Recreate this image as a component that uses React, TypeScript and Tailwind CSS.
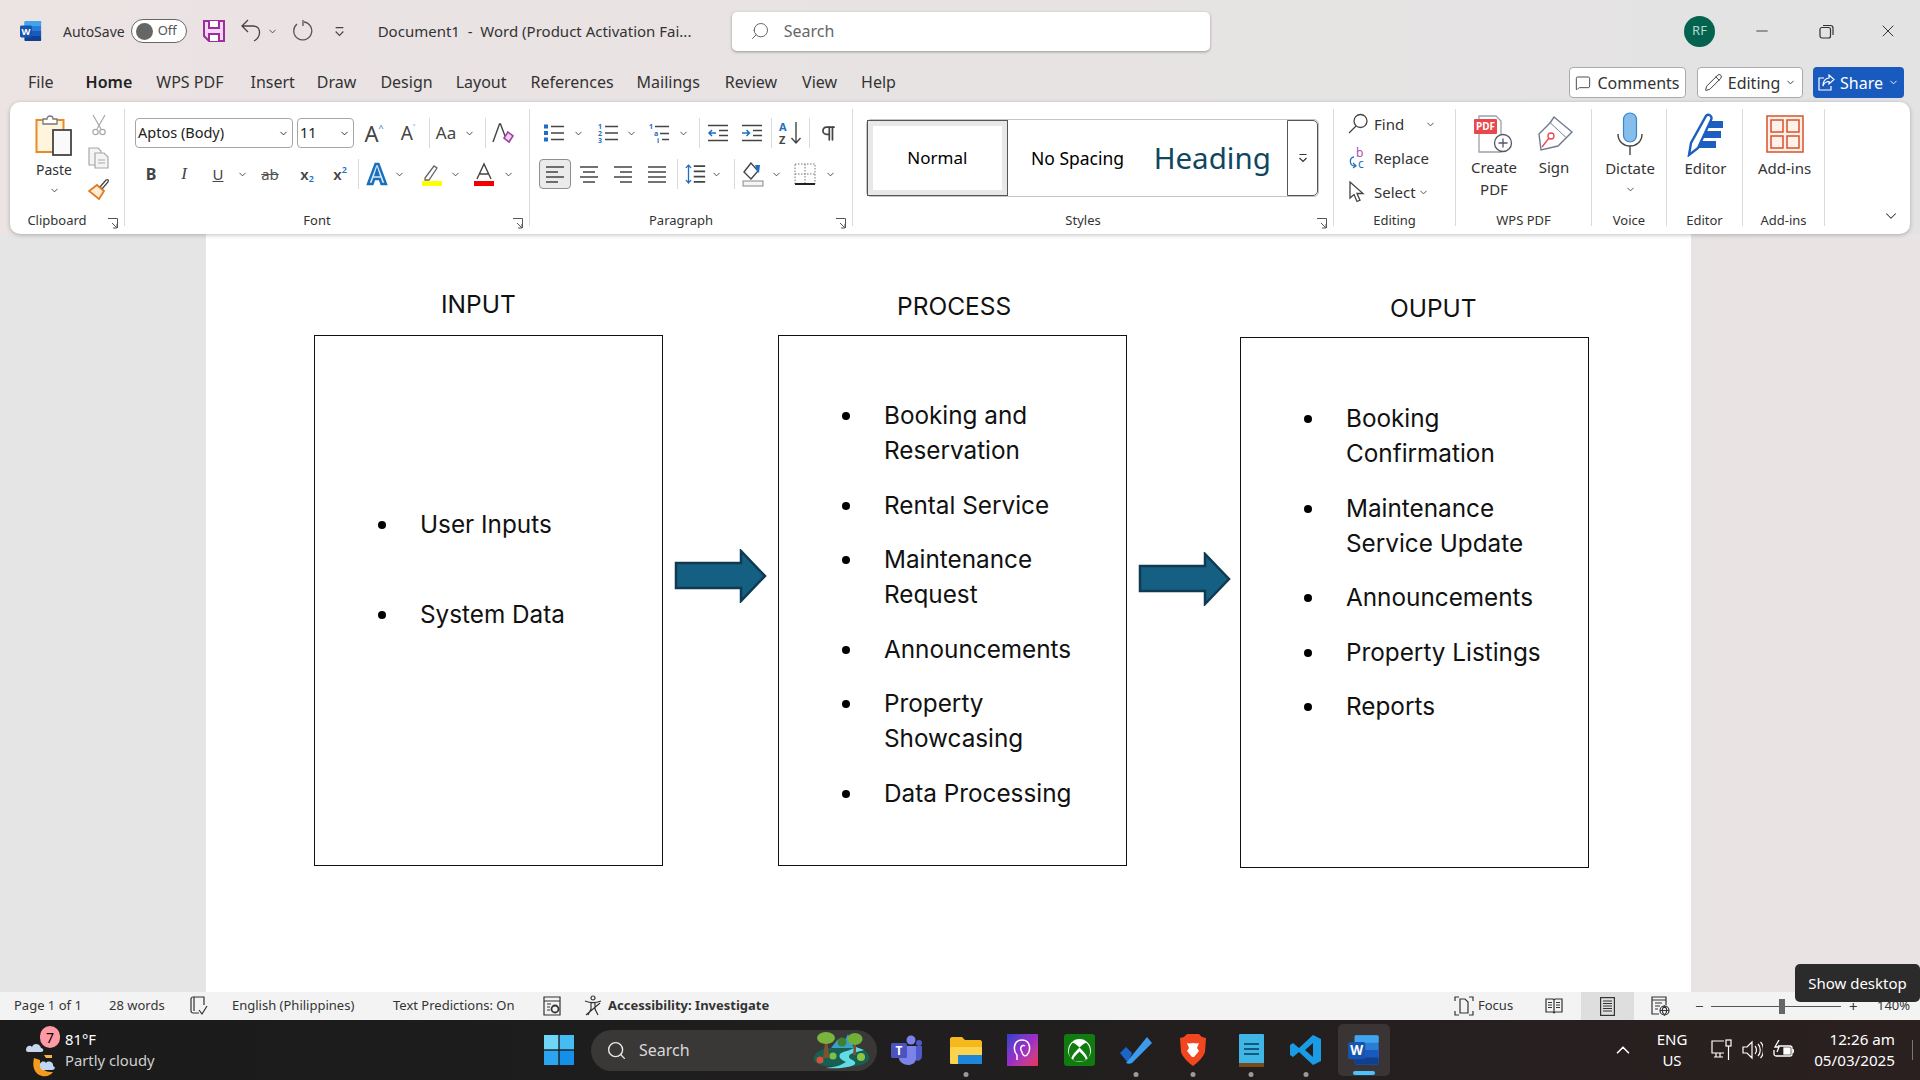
import { ReactNode } from "react";
import { ChevronDown, ChevronUp, Minus, X, Search, Pencil, MessageSquare, Pilcrow } from "lucide-react";

const Chev = ({ className = "w-[14px]", size = 11 }: { className?: string; size?: number }) => (
  <div className={`flex h-full shrink-0 items-center justify-center text-[#444] ${className}`}>
    <ChevronDown size={size} strokeWidth={2} />
  </div>
);

const Slot = ({ className = "", children }: { className?: string; children: ReactNode }) => (
  <div className={`flex h-full w-[32px] shrink-0 items-center justify-center ${className}`}>{children}</div>
);

const VSep = ({ className = "" }: { className?: string }) => (
  <div className={`h-full w-px shrink-0 bg-[#d9d9d9] ${className}`} />
);

const Launcher = () => (
  <svg width="11" height="11" viewBox="0 0 11 11" className="absolute right-[6px] bottom-[-3px]" fill="none" stroke="#555" strokeWidth="1">
    <path d="M1 .5h9.5V10M5 5l4.5 4.5M6 10h4V6" />
  </svg>
);

function Group({ className, label, launcher, children }: { className: string; label: string; launcher?: boolean; children: ReactNode }) {
  return (
    <div className={`flex h-[117px] shrink-0 flex-col border-r border-[#d9d9d9] ${className}`}>
      <div className="min-h-0 flex-1 pt-[4px]">{children}</div>
      <div className={`relative h-[17px] pt-[3px] text-center text-[13px] leading-[17px] text-[#333] ${launcher ? "pr-[20px]" : ""}`}>
        {label}
        {launcher && <Launcher />}
      </div>
    </div>
  );
}

const WordLogo = ({ size = 22 }: { size?: number }) => (
  <svg width={size} height={size} viewBox="0 0 24 24">
    <rect x="5" y="1" width="18" height="22" rx="1.5" fill="#2b7cd3" />
    <rect x="5" y="1" width="18" height="5.5" rx="1" fill="#41a5ee" />
    <rect x="5" y="12" width="18" height="5.5" fill="#185abd" />
    <rect x="5" y="17.5" width="18" height="5.5" rx="1" fill="#103f91" />
    <rect x="0" y="6" width="13" height="13" rx="1.5" fill="#1754b0" />
    <text x="6.5" y="16" textAnchor="middle" fontSize="10" fontWeight="700" fill="#fff" fontFamily="Noto Sans, sans-serif">W</text>
  </svg>
);

const ListLines = ({ mark }: { mark: "bullet" | "num" | "multi" }) => (
  <svg width="22" height="20" viewBox="0 0 22 20" fill="none">
    {mark === "bullet" && (
      <g fill="#1d6fc4">
        <rect x="1" y="1.5" width="4" height="4" />
        <rect x="1" y="8" width="4" height="4" />
        <rect x="1" y="14.5" width="4" height="4" />
      </g>
    )}
    {mark === "num" && (
      <g fill="#1d6fc4" fontSize="7" fontWeight="700" fontFamily="Noto Sans, sans-serif">
        <text x="1" y="6">1</text><text x="1" y="13">2</text><text x="1" y="20">3</text>
      </g>
    )}
    {mark === "multi" && (
      <g fill="#1d6fc4" fontSize="7" fontWeight="700" fontFamily="Noto Sans, sans-serif">
        <text x="0" y="6">1</text><text x="5" y="13">a</text><text x="8" y="20">i</text>
      </g>
    )}
    <path
      d={mark === "multi" ? "M6 3.5h14M11 10.5h9M13 16.5h7" : "M8 3.5h13M8 10h13M8 16.5h13"}
      stroke="#444"
      strokeWidth="1.6"
    />
  </svg>
);

const Indent = ({ flip }: { flip?: boolean }) => (
  <svg width="22" height="20" viewBox="0 0 22 20" fill="none" stroke="#444" strokeWidth="1.5">
    <path d="M1 2.5h20M12 7.5h9M12 12.5h9M1 17.5h20" />
    <path d={flip ? "M1 10h7M5.5 7l3 3-3 3" : "M9 10H2M5 7l-3 3 3 3"} stroke="#1d6fc4" />
  </svg>
);

const Align = ({ kind }: { kind: "l" | "c" | "r" | "j" }) => {
  const d = {
    l: "M1 3h18M1 8h12M1 13h18M1 18h12",
    c: "M1 3h18M4 8h12M1 13h18M4 18h12",
    r: "M1 3h18M7 8h12M1 13h18M7 18h12",
    j: "M1 3h18M1 8h18M1 13h18M1 18h18",
  }[kind];
  return (
    <svg width="20" height="21" viewBox="0 0 20 21" fill="none" stroke="#444" strokeWidth="1.6">
      <path d={d} />
    </svg>
  );
};

function ClipboardGroup() {
  return (
    <div className="flex h-full pl-[14px]">
      <div className="flex w-[60px] flex-col items-center">
        <svg width="38" height="42" viewBox="0 0 38 42" fill="none" className="mt-[2px]">
          <rect x="1.500" y="5" width="27" height="32" fill="#fff4dc" stroke="#e8892b" strokeWidth="2" />
          <path d="M8 9V4h4c0-4 6-4 6 0h4v5z" fill="#fff" stroke="#777" strokeWidth="1.300" />
          <rect x="18" y="15" width="18" height="25" fill="#fafafa" stroke="#444" strokeWidth="1.800" />
        </svg>
        <span className="mt-[3px] text-[14px] leading-[20px] text-[#333]">Paste</span>
        <ChevronDown size={11} className="mt-[5px] text-[#444]" />
      </div>
      <div className="flex flex-col items-center gap-[11px] pl-[4px]">
        <svg width="16" height="22" viewBox="0 0 16 22" fill="none" stroke="#a8a8a8" strokeWidth="1.200" className="mt-[1px]">
          <path d="M2 1l8 14M14 1 6 15" />
          <circle cx="4.500" cy="18" r="2.700" />
          <circle cx="11.500" cy="18" r="2.700" />
        </svg>
        <svg width="22" height="22" viewBox="0 0 22 22" fill="#f4f4f4" stroke="#a8a8a8" strokeWidth="1.200">
          <path d="M1 1h9l3 3v14H1z" />
          <path d="M7 6h9l4 4v11H7z" />
          <path d="M10 13h7M10 16h7" fill="none" />
        </svg>
        <svg width="22" height="22" viewBox="0 0 22 22" fill="none" className="-mt-[2px]">
          <path d="M12 9 18 2c2-1 3 0 2 2l-6 7z" stroke="#444" strokeWidth="1.300" />
          <path d="M9 7l7 6-5 8-10-8z" fill="#fdebd3" stroke="#e07a1f" strokeWidth="1.800" />
        </svg>
      </div>
    </div>
  );
}

function FontGroup() {
  return (
    <div className="flex h-full flex-col gap-[11px] pt-[5px] pl-[10px]">
      <div className="flex h-[30px]">
        <div className="flex h-full w-[158px] items-center justify-between rounded-[4px] border border-[#a6a6a6] pr-[3px] pl-[2px] text-[14.5px] text-[#222]">
          Aptos (Body) <ChevronDown size={11} />
        </div>
        <div className="ml-[4px] flex h-full w-[57px] items-center justify-between rounded-[4px] border border-[#a6a6a6] pr-[3px] pl-[2px] text-[14.5px] text-[#222]">
          11 <ChevronDown size={11} />
        </div>
        <Slot className="ml-[2px] w-[36px] text-[22px] text-[#444]">A<span className="-mt-[10px] text-[9px] text-[#1d6fc4]">^</span></Slot>
        <Slot className="w-[30px] text-[19px] text-[#444]">A<span className="-mt-[10px] text-[8px] text-[#1d6fc4]">˅</span></Slot>
        <VSep className="ml-[5px]" />
        <Slot className="text-[17px] text-[#444]">Aa</Slot>
        <Chev />
        <VSep className="ml-[9px]" />
        <Slot className="w-[34px]">
          <svg width="24" height="24" viewBox="0 0 24 24" fill="none">
            <path d="M2 21 8.5 3h1L14 15" stroke="#444" strokeWidth="1.4" />
            <path d="m17 11 5 4-4 6-5-4z" fill="#e9d4ee" stroke="#a33ea1" strokeWidth="1.6" />
          </svg>
        </Slot>
      </div>
      <div className="flex h-[30px] items-center">
        <Slot className="text-[16px] font-bold text-[#444]">B</Slot>
        <Slot className="ml-px font-['Liberation_Serif',serif] text-[17px] italic text-[#444]">I</Slot>
        <Slot className="ml-[2px] text-[15px] text-[#444] underline">U</Slot>
        <Chev className="ml-px w-[14px]" />
        <Slot className="ml-[5px] text-[15px] text-[#555] line-through">ab</Slot>
        <Slot className="ml-[5px] text-[15px] font-semibold text-[#444]">x<span className="mt-[10px] text-[9px] text-[#1d6fc4]">2</span></Slot>
        <Slot className="ml-px text-[15px] font-semibold text-[#444]">x<span className="-mt-[9px] text-[9px] text-[#1d6fc4]">2</span></Slot>
        <VSep className="ml-[2px]" />
        <Slot className="ml-[2px]">
          <svg width="22" height="24" viewBox="0 0 22 24" fill="#d7e9f8" stroke="#1a6fbd" strokeWidth="2.4">
            <path d="M2 22 9.500 2h3L20 22h-4.500l-1.700-5H8.200l-1.700 5zM9.600 13h2.800L11 8.500z" />
          </svg>
        </Slot>
        <Chev className="w-[12px]" />
        <Slot className="ml-[11px]">
          <svg width="22" height="24" viewBox="0 0 22 24" fill="none">
            <path d="M4 16 13 4l3 2-8 12H4z" stroke="#666" strokeWidth="1.3" />
            <rect x="1" y="19" width="20" height="5" fill="#ffff00" />
          </svg>
        </Slot>
        <Chev className="ml-px w-[12px]" />
        <Slot className="ml-[7px]">
          <svg width="22" height="24" viewBox="0 0 22 24" fill="none">
            <path d="M4 17 11 2l7 15M6.500 12h9" stroke="#444" strokeWidth="1.4" />
            <rect x="1" y="19" width="20" height="5" fill="#f00000" />
          </svg>
        </Slot>
        <Chev className="ml-[2px] w-[12px]" />
      </div>
    </div>
  );
}

function ParagraphGroup() {
  return (
    <div className="flex h-full flex-col gap-[11px] pt-[5px] pl-[8px]">
      <div className="flex h-[30px]">
        <Slot><ListLines mark="bullet" /></Slot>
        <Chev className="ml-px w-[14px]" />
        <Slot className="ml-[7px]"><ListLines mark="num" /></Slot>
        <Chev className="w-[14px]" />
        <Slot className="ml-[6px]"><ListLines mark="multi" /></Slot>
        <Chev className="w-[14px]" />
        <VSep className="ml-[9px]" />
        <Slot className="ml-[2px]"><Indent /></Slot>
        <Slot className="ml-[2px]"><Indent flip /></Slot>
        <VSep className="ml-[3px]" />
        <Slot className="ml-[3px]">
          <svg width="26" height="26" viewBox="0 0 26 26" fill="none">
            <text x="1" y="11" fontSize="11" fontWeight="700" fill="#1d6fc4" fontFamily="Noto Sans, sans-serif">A</text>
            <text x="1" y="24" fontSize="11" fontWeight="700" fill="#444" fontFamily="Noto Sans, sans-serif">Z</text>
            <path d="M18 2v21M13.500 18l4.500 5 4.500-5" stroke="#444" strokeWidth="1.4" />
          </svg>
        </Slot>
        <VSep className="ml-[2px]" />
        <Slot className="ml-[2px]"><Pilcrow size={19} strokeWidth={2.2} className="text-[#444]" /></Slot>
      </div>
      <div className="-ml-px flex h-[30px]">
        <Slot className="ml-[2px] w-[30px] rounded-[4px] border border-[#8f8f8f] bg-[#ebebeb]"><Align kind="l" /></Slot>
        <Slot className="ml-[2px]"><Align kind="c" /></Slot>
        <Slot className="ml-[2px]"><Align kind="r" /></Slot>
        <Slot className="ml-[2px]"><Align kind="j" /></Slot>
        <VSep className="ml-[4px]" />
        <Slot className="ml-[1px]">
          <svg width="21" height="22" viewBox="0 0 24 24" fill="none">
            <path d="M10 3h13M10 9h13M10 15h13M10 21h13" stroke="#444" strokeWidth="1.8" />
            <path d="M4 1v22M1 5l3-3 3 3M1 19l3 3 3-3" stroke="#1d6fc4" strokeWidth="1.500" />
          </svg>
        </Slot>
        <Chev className="-ml-[2px] w-[14px]" />
        <VSep className="ml-[11px]" />
        <Slot className="ml-[2px]">
          <svg width="24" height="26" viewBox="0 0 24 26" fill="none">
            <path d="m10 2-7 9 7 7 7-8z" stroke="#444" strokeWidth="1.4" />
            <path d="M14 4h5l-1 8-2-2z" fill="#1d6fc4" />
            <rect x="2" y="20" width="20" height="5" fill="#f4f4f4" stroke="#888" />
          </svg>
        </Slot>
        <Chev className="w-[14px]" />
        <Slot className="ml-[6px]">
          <svg width="22" height="22" viewBox="0 0 22 22" fill="none" stroke="#777" strokeWidth="1" strokeDasharray="1.500 1.500">
            <rect x="1" y="1" width="20" height="20" />
            <path d="M11 1v20M1 11h20" />
            <path d="M1 21h20" stroke="#222" strokeWidth="2" strokeDasharray="none" />
          </svg>
        </Slot>
        <Chev className="ml-[2px] w-[14px]" />
      </div>
    </div>
  );
}

function StylesGroup() {
  return (
    <div className="pt-[6px] pl-[13px]">
      <div className="flex h-[78px] w-[453px] items-stretch rounded-[5px] border border-[#c4c4c4]">
        <div className="flex w-[141px] items-center justify-center border-[1.5px] border-[#555] text-[17px] text-black outline-[5px] -outline-offset-[6px] outline-[#e8e8e8]">
          Normal
        </div>
        <div className="flex w-[140px] items-center justify-center whitespace-nowrap text-[17.5px] text-black">No Spacing</div>
        <div className="flex w-[140px] items-center justify-center pr-[10px] text-[29.5px] text-[#0f4761]">Heading</div>
        <div className="flex w-[31px] items-center justify-center rounded-r-[5px] border border-[#555]">
          <svg width="10" height="10" viewBox="0 0 10 10" fill="none" stroke="#333" strokeWidth="1.2">
            <path d="M1.500 1.500h7M1.500 5l3.500 3.500L8.500 5" />
          </svg>
        </div>
      </div>
    </div>
  );
}

function EditingGroup() {
  return (
    <div className="-mt-px flex flex-col gap-[10px] pl-[13px] text-[15px] text-[#333]">
      <div className="flex h-[24px] items-center">
        <div className="flex w-[27px] justify-start">
          <svg width="22" height="22" viewBox="0 0 22 22" fill="none" stroke="#444" strokeWidth="1.3">
            <circle cx="13.500" cy="8" r="6.500" />
            <path d="M9 13 2 20" />
          </svg>
        </div>
        <span>Find</span>
        <ChevronDown size={11} className="ml-[21px] text-[#444]" />
      </div>
      <div className="flex h-[24px] items-center">
        <div className="flex w-[27px] justify-start">
          <svg width="22" height="24" viewBox="0 0 22 24" fill="none">
            <text x="9" y="11" fontSize="12" fill="#b04bb5" fontFamily="Noto Sans, sans-serif">b</text>
            <text x="11" y="22" fontSize="12" fill="#1d6fc4" fontFamily="Noto Sans, sans-serif">c</text>
            <path d="M7 11c-5 0-5 9 1 9M6 17l3 3-3 2" stroke="#1d6fc4" strokeWidth="1.3" />
          </svg>
        </div>
        <span>Replace</span>
      </div>
      <div className="flex h-[24px] items-center">
        <div className="flex w-[27px] justify-start">
          <svg width="20" height="22" viewBox="0 0 20 22" fill="none" stroke="#444" strokeWidth="1.300">
            <path d="M3 1v16l4-3.500 3 7 3-1.300-3-6.700h6z" />
          </svg>
        </div>
        <span>Select</span>
        <ChevronDown size={11} className="ml-[2px] text-[#444]" />
      </div>
    </div>
  );
}

function WpsGroup() {
  return (
    <div className="flex pl-[14px] text-center text-[15px] leading-[22px] text-[#333]">
      <div className="flex w-[48px] flex-col items-center">
        <svg width="42" height="38" viewBox="0 0 42 38" fill="none" className="mt-[2px] mb-[3px]">
          <path d="M6 1h17l5 5v31H6z" fill="#fff" stroke="#9aa0a8" strokeWidth="1.3" />
          <rect x="1" y="4" width="23" height="15" rx="1" fill="#e8474c" />
          <text x="12.500" y="15" textAnchor="middle" fontSize="10" fontWeight="700" fill="#fff" fontFamily="Noto Sans, sans-serif">PDF</text>
          <circle cx="30" cy="28" r="8.500" fill="#fff" stroke="#556" strokeWidth="1.3" />
          <path d="M30 23.500v9M25.500 28h9" stroke="#556" strokeWidth="1.3" />
        </svg>
        <span>Create</span>
        <span>PDF</span>
      </div>
      <div className="ml-[12px] flex w-[48px] flex-col items-center">
        <svg width="40" height="38" viewBox="0 0 40 38" fill="none" className="mt-[2px] mb-[3px]">
          <path d="M20 2 38 17l-6 6L16 8z" fill="#fff" stroke="#6d7a8c" strokeWidth="1.4" />
          <path d="M16 8 5 19l2 16 17-4 8-8" fill="#fff" stroke="#6d7a8c" strokeWidth="1.4" />
          <circle cx="17" cy="21" r="3" stroke="#e8474c" strokeWidth="1.3" />
          <path d="m15 23-7 9" stroke="#e8474c" strokeWidth="1.3" />
        </svg>
        <span>Sign</span>
      </div>
    </div>
  );
}

function VoiceGroup() {
  return (
    <div className="flex flex-col items-center pl-[2px] text-[15px] leading-[22px] text-[#333]">
      <svg width="30" height="44" viewBox="0 0 30 44" fill="none" className="-mt-[1px]">
        <rect x="8.500" y="1" width="13" height="29" rx="6.500" fill="#85bdec" stroke="#3a85cc" strokeWidth="1.2" />
        <path d="M3 22c0 16 24 16 24 0M15 34v9" stroke="#444" strokeWidth="1.4" />
      </svg>
      <span className="mt-[1px]">Dictate</span>
      <ChevronDown size={11} className="mt-[5px] text-[#444]" />
    </div>
  );
}

function EditorGroup() {
  return (
    <div className="flex flex-col items-center pl-[2px] text-[15px] leading-[22px] text-[#333]">
      <svg width="42" height="44" viewBox="0 0 42 44" fill="none">
        <path d="M22 8h16v7H20zM18 18h18v7H16zM15 28h16v7H13z" fill="#1d5fc0" />
        <path d="M4 42 6 30 21 3c2-3 7 0 5 4L13 35z" fill="#fff" stroke="#1d5fc0" strokeWidth="2.4" />
      </svg>
      <span>Editor</span>
    </div>
  );
}

function AddinsGroup() {
  return (
    <div className="flex flex-col items-center pl-[2px] text-[15px] leading-[22px] text-[#333]">
      <svg width="38" height="38" viewBox="0 0 38 38" fill="none" stroke="#d8512b" strokeWidth="1.500" className="mt-[2px] mb-[4px]">
        <rect x="1" y="1" width="36" height="36" fill="#fdf1ec" />
        <rect x="5" y="5" width="12" height="12" />
        <rect x="21" y="5" width="12" height="12" />
        <rect x="5" y="21" width="12" height="12" />
        <rect x="21" y="21" width="12" height="12" />
      </svg>
      <span>Add-ins</span>
    </div>
  );
}

function Bullets({ items, className }: { items: string[][]; className: string }) {
  return (
    <ul className={`flex flex-col text-[24.3px] leading-[35px] text-[#111] ${className}`}>
      {items.map((lines) => (
        <li key={lines[0]} className="flex">
          <span className="mt-[14px] ml-[63px] h-[8px] w-[8px] shrink-0 rounded-full bg-black" />
          <span className="ml-[34px]">
            {lines.map((l) => <span key={l} className="block whitespace-nowrap">{l}</span>)}
          </span>
        </li>
      ))}
    </ul>
  );
}

const Arrow = ({ className }: { className: string }) => (
  <svg width="93" height="54" viewBox="0 0 93 54" className={`absolute ${className}`}>
    <path d="M2 14h65V2l24 25-24 25V39H2z" fill="#156082" stroke="#0e3b52" strokeWidth="2.500" />
  </svg>
);

const DiagramBox = ({ className, children }: { className: string; children: ReactNode }) => (
  <div className={`absolute h-[531px] w-[349px] border-[1.5px] border-[#111] ${className}`}>{children}</div>
);

function Page() {
  return (
    <div className="relative ml-[206px] h-full w-[1485px] bg-white font-['Inter',sans-serif] text-[24.5px] text-[#111]">
      <span className="absolute top-[52px] left-[235px]">INPUT</span>
      <span className="absolute top-[54px] left-[691px]">PROCESS</span>
      <span className="absolute top-[56px] left-[1184px]">OUPUT</span>
      <DiagramBox className="top-[101px] left-[108px]">
        <Bullets className="gap-[55px] pt-[171px]" items={[["User Inputs"], ["System Data"]]} />
      </DiagramBox>
      <DiagramBox className="top-[101px] left-[572px]">
        <Bullets
          className="gap-[19.6px] pt-[62px]"
          items={[["Booking and", "Reservation"], ["Rental Service"], ["Maintenance", "Request"], ["Announcements"], ["Property", "Showcasing"], ["Data Processing"]]}
        />
      </DiagramBox>
      <DiagramBox className="top-[103px] left-[1034px]">
        <Bullets
          className="gap-[19.6px] pt-[63px]"
          items={[["Booking", "Confirmation"], ["Maintenance", "Service Update"], ["Announcements"], ["Property Listings"], ["Reports"]]}
        />
      </DiagramBox>
      <Arrow className="top-[315px] left-[468px]" />
      <Arrow className="top-[318px] left-[932px]" />
    </div>
  );
}

const ReadIcon = () => (
  <svg width="18" height="18" viewBox="0 0 18 18" fill="none" stroke="#333" strokeWidth="1.200">
    <path d="M1 2h7l1 1 1-1h7v13h-7l-1 1-1-1H1zM9 3v12M3 5.500h4M3 8h4M3 10.500h4M11 5.500h4M11 8h4M11 10.500h4" />
  </svg>
);

function StatusBar() {
  return (
    <div className="flex h-[28px] shrink-0 items-center bg-[#f3f3f3] pl-[14px] text-[13px] text-[#333]">
      <span className="w-[75px]">Page 1 of 1</span>
      <span className="ml-[20px] w-[60px]">28 words</span>
      <svg width="18" height="20" viewBox="0 0 18 20" fill="none" stroke="#333" strokeWidth="1.200" className="ml-[21px]">
        <path d="M9 17H3c-1 0-2-1-2-2V3c0-1 1-2 2-2h11v8M4 1v14" />
        <path d="m9 14 3 4 5-8" />
      </svg>
      <span className="ml-[24px] w-[123px] whitespace-nowrap">English (Philippines)</span>
      <span className="ml-[38px] w-[124px] whitespace-nowrap">Text Predictions: On</span>
      <svg width="20" height="20" viewBox="0 0 20 20" fill="none" stroke="#333" strokeWidth="1.200" className="ml-[25px]">
        <path d="M2 1h16v18H2zM2 5h16M5 8h4M5 11h3M5 14h3" />
        <circle cx="13" cy="13" r="3.500" strokeWidth="1.800" />
      </svg>
      <svg width="20" height="22" viewBox="0 0 20 22" fill="none" stroke="#333" strokeWidth="1.200" className="ml-[21px]">
        <circle cx="10" cy="3" r="2" />
        <path d="M2 6c5 2 11 2 16 0M8 8v6l-3 6M12 8v6l3 6M3 20 17 8" />
      </svg>
      <span className="ml-[5px] font-bold">Accessibility: Investigate</span>
      <div className="ml-auto flex h-full items-center">
        <svg width="20" height="20" viewBox="0 0 20 20" fill="none" stroke="#333" strokeWidth="1.200">
          <path d="M1 5V1h4M15 1h4v4M19 15v4h-4M5 19H1v-4" />
          <path d="M6 3h5l3 3v11H6z" />
        </svg>
        <span className="ml-[4px] w-[35px]">Focus</span>
        <div className="ml-[32px]"><ReadIcon /></div>
        <div className="ml-[18px] flex h-full w-[53px] items-center justify-center bg-[#dedede]">
          <svg width="15" height="19" viewBox="0 0 15 19" fill="none" stroke="#333" strokeWidth="1.200">
            <rect x=".6" y=".6" width="13.800" height="17.800" />
            <path d="M3 4h9M3 6.500h9M3 9h9M3 11.500h9M3 14h9" />
          </svg>
        </div>
        <svg width="19" height="20" viewBox="0 0 19 20" fill="none" stroke="#333" strokeWidth="1.200" className="ml-[17px]">
          <path d="M8 18H1V1h14v8M1 4h14M4 7h7M4 10h5M4 13h3" />
          <circle cx="13.500" cy="14.500" r="4.500" fill="#f3f3f3" />
          <path d="M9 14.500h9M13.500 10c-3 3-3 6 0 9 3-3 3-6 0-9z" />
        </svg>
        <Minus size={11} className="ml-[24px]" />
        <div className="relative ml-[6px] h-px w-[130px] bg-[#555]">
          <div className="absolute top-[-7px] left-[68px] h-[15px] w-[6px] bg-[#666]" />
        </div>
        <span className="ml-[8px] w-[9px] text-[15px] leading-none">+</span>
        <span className="ml-[19px] w-[43px]">140%</span>
      </div>
    </div>
  );
}

const TaskDot = ({ className = "" }: { className?: string }) => (
  <span className={`absolute bottom-[3px] left-1/2 h-[5px] w-[5px] -translate-x-1/2 rounded-full bg-[#9a9a9a] ${className}`} />
);

const TaskIcon = ({ className, dot, children }: { className: string; dot?: boolean; children: ReactNode }) => (
  <div className={`relative flex h-[60px] shrink-0 items-center justify-center ${className}`}>
    {children}
    {dot && <TaskDot />}
  </div>
);

function Taskbar() {
  return (
    <div className="flex h-[60px] shrink-0 items-center bg-gradient-to-r from-[#1b1b1b] via-[#201e1e] to-[#2b2020] text-white">
      <div className="relative ml-[25px] h-[60px] w-[40px] shrink-0">
        <svg width="36" height="50" viewBox="0 0 36 50" className="absolute top-[8px] left-0">
          <path d="M1 22c0-5 5-5 6-3 2-5 8-3 9 1 3 0 3 4 0 4H3c-1 0-2-1-2-2z" fill="#c7d8ee" />
          <path d="M9 30c-2 8 0 16 8 18 5 1 9-1 11-4-8 1-14-5-13-12z" fill="#f39b1d" />
          <path d="M15 38c-1-4 4-6 6-3 2-3 8-1 7 3 3 1 2 4-1 4H18c-2 0-3-2-3-4z" fill="#bfd8f4" />
          <path d="M27 27h-8l2 3h6z" fill="#f3b545" />
        </svg>
        <span className="absolute top-[6px] left-[15px] flex h-[22px] w-[20px] items-center justify-center rounded-full bg-[#ff9aa5] text-[14px] text-black">7</span>
      </div>
      <div className="flex w-[100px] shrink-0 flex-col text-[14.8px] leading-[21px]">
        <span>81°F</span>
        <span className="text-[#cfcfcf]">Partly cloudy</span>
      </div>
      <svg width="30" height="30" viewBox="0 0 30 30" className="ml-[379px] shrink-0">
        <rect x="0" y="0" width="14.300" height="14.300" fill="#6fd6f8" />
        <rect x="15.700" y="0" width="14.300" height="14.300" fill="#46bdf2" />
        <rect x="0" y="15.700" width="14.300" height="14.300" fill="#2ba5ee" />
        <rect x="15.700" y="15.700" width="14.300" height="14.300" fill="#1490ea" />
      </svg>
      <div className="ml-[17px] flex h-[41px] w-[286px] shrink-0 items-center rounded-full bg-[#3a3837] pl-[15px]">
        <Search size={21} strokeWidth={1.6} className="text-[#e8e8e8]" />
        <span className="ml-[12px] text-[16px] text-[#d8d8d8]">Search</span>
        <svg width="60" height="38" viewBox="0 0 60 38" className="mr-[6px] ml-auto">
          <path d="M3 26c2-6 8-8 14-9h26c8 0 14 3 15 9 1 6-8 10-28 10S1 32 3 26z" fill="#175f52" />
          <path d="M30 17 37 3l6 14zM20 17l7-9 5 9z" fill="#3aa0c8" />
          <path d="M15 37c8-1 14-2 20-6-4-2-8-4-6-8 3-3 10-3 16-7l8 3c-6 2-14 3-15 6-1 4 8 4 6 8-3 3-14 5-29 4z" fill="#63dbe6" />
          <path d="M14 12h2.500l2 15H12zM43 12h2v12h-3z" fill="#7a5230" />
          <ellipse cx="15" cy="7" rx="9" ry="6" fill="#79b53c" />
          <ellipse cx="44" cy="8" rx="7.500" ry="6" fill="#6faf3a" />
          <ellipse cx="31" cy="11" rx="4.500" ry="4.500" fill="#3f7f30" />
          <circle cx="9" cy="29" r="3.500" fill="#d8503c" />
          <circle cx="22" cy="25" r="3.500" fill="#7fc04a" />
          <circle cx="50" cy="26" r="4" fill="#8cc63f" />
        </svg>
      </div>
      <TaskIcon className="ml-[12px] w-[36px]">
        <svg width="32" height="30" viewBox="0 0 32 30">
          <circle cx="20" cy="5" r="4.500" fill="#7b83eb" />
          <circle cx="28" cy="8" r="3" fill="#5059c9" />
          <path d="M22 11h9v10c0 4-4 6-7 4z" fill="#5059c9" />
          <path d="M8 11h17v12c0 5-4 7-8 7s-9-3-9-7z" fill="#7b83eb" />
          <rect x="0" y="8" width="16" height="15" rx="1.500" fill="#4b53bc" />
          <text x="8" y="20" textAnchor="middle" fontSize="12" fontWeight="700" fill="#fff" fontFamily="Noto Sans, sans-serif">T</text>
        </svg>
      </TaskIcon>
      <TaskIcon className="ml-[25px] w-[32px]" dot>
        <svg width="32" height="28" viewBox="0 0 32 28">
          <path d="M0 3c0-1 1-2 2-2h10l3 3h15c1 0 2 1 2 2v20c0 1-1 2-2 2H2c-1 0-2-1-2-2z" fill="#f6b91d" />
          <rect x="0" y="11" width="32" height="17" rx="1.500" fill="#fcd34d" />
          <rect x="8" y="19" width="24" height="9" fill="#1d86d8" />
        </svg>
      </TaskIcon>
      <TaskIcon className="ml-[24px] w-[32px]">
        <div className="flex h-[32px] w-[31px] items-center justify-center bg-gradient-to-br from-[#2440c8] via-[#9a2bc9] to-[#ee2a50]">
          <svg width="20" height="24" viewBox="0 0 20 24" fill="none" stroke="#fff" strokeWidth="1.500">
            <path d="M5 22v-5C1 13 1 2 10 2s9 11 5 15c-2 2-5 0-5-3-3-4 0-8 3-6" />
          </svg>
        </div>
      </TaskIcon>
      <TaskIcon className="ml-[26px] w-[31px]">
        <div className="flex h-[32px] w-[31px] items-center justify-center rounded-[3px] bg-[#107c10]">
          <svg width="25" height="25" viewBox="0 0 24 24" fill="#fff">
            <circle cx="12" cy="12" r="11" />
            <path d="M12 9C9 6 6 4 5 5c-4 4-4 11-1 15 1-4 5-8 8-11zm0 0c3-3 6-5 7-4 4 4 4 11 1 15-1-4-5-8-8-11zm0 4c-3 3-6 6-6 8 3 2 9 2 12 0 0-2-3-5-6-8z" fill="#107c10" />
          </svg>
        </div>
      </TaskIcon>
      <TaskIcon className="ml-[25px] w-[32px]" dot>
        <svg width="32" height="28" viewBox="0 0 32 28">
          <path d="M0 17 6 11l6 6L8 27z" fill="#1b64c8" />
          <path d="M6 27 27 1l5 6-20 20c-2 1-4 1-6 0z" fill="#3d9bec" />
        </svg>
      </TaskIcon>
      <TaskIcon className="ml-[28px] w-[26px]" dot>
        <svg width="26" height="32" viewBox="0 0 26 32">
          <path d="M7 0h12l3 3 4 1-1 14c-2 6-8 11-12 14C9 29 3 24 1 18L0 4l4-1z" fill="#f1461f" />
          <path d="M7 9c3 1 4 0 6 0s3 1 6 0l-2 5 2 3-5 6h-2l-5-6 2-3z" fill="#fff" />
        </svg>
      </TaskIcon>
      <TaskIcon className="ml-[32px] w-[26px]" dot>
        <svg width="25" height="34" viewBox="0 0 25 34">
          <rect x="0" y="1" width="25" height="33" rx="1" fill="#3fb6e6" />
          <rect x="0" y="30" width="25" height="4" fill="#7c4a16" />
          <path d="M5 11h15M5 16h15M5 21h15" stroke="#12597a" strokeWidth="2" />
        </svg>
      </TaskIcon>
      <TaskIcon className="ml-[26px] w-[32px]" dot>
        <svg width="32" height="32" viewBox="0 0 32 32" fill="none">
          <path d="M23 1 31 5v22l-8 4L9 18l-6 5-3-2v-10l3-2 6 5zM23 9l-8 7 8 7z" fill="#1a9be6" fillRule="evenodd" />
        </svg>
      </TaskIcon>
      <div className="relative ml-[16px] flex h-[52px] w-[52px] shrink-0 items-center justify-center rounded-[5px] bg-[#3a3434]">
        <WordLogo size={32} />
        <span className="absolute bottom-[1px] left-[15px] h-[4px] w-[22px] rounded-full bg-[#4cc2ff]" />
      </div>
      <ChevronUp size={22} strokeWidth={1.8} className="ml-[222px] shrink-0" />
      <div className="ml-[15px] flex w-[46px] shrink-0 flex-col items-center text-[15px] leading-[21px]">
        <span>ENG</span>
        <span>US</span>
      </div>
      <svg width="21" height="22" viewBox="0 0 21 22" fill="none" stroke="#fff" strokeWidth="1.200" className="ml-[16px] shrink-0">
        <path d="M13 14H1V2h12M5 14v4M9 14v4M3 18h9" />
        <rect x="15" y="1" width="5" height="6" />
        <path d="M17.500 7v14" />
      </svg>
      <svg width="21" height="20" viewBox="0 0 21 20" fill="none" stroke="#fff" strokeWidth="1.200" className="ml-[10px] shrink-0">
        <path d="M1 7h4l5-5v16l-5-5H1zM13 6c2 2 2 6 0 8M16 4c3 3 3 9 0 12M18.500 2c4 4 4 12 0 16" />
      </svg>
      <svg width="21" height="20" viewBox="0 0 21 20" fill="none" stroke="#fff" strokeWidth="1.300" className="ml-[10px] shrink-0">
        <path d="M5 6H17c1 0 2 1 2 2v6c0 1-1 2-2 2H3c-1 0-2-1-2-2V10M19 10h2v2h-2" />
        <path d="M6 0 2 7h4l-2 5" />
        <rect x="11" y="8" width="6" height="6" fill="#fff" />
      </svg>
      <div className="mr-[17px] ml-auto flex flex-col items-end text-[15.2px] leading-[21px]">
        <span>12:26 am</span>
        <span>05/03/2025</span>
      </div>
      <div className="mr-[7px] h-[20px] w-px bg-[#777]" />
    </div>
  );
}

export default function App() {
  return (
    <div className="relative flex h-[1080px] w-[1920px] flex-col overflow-hidden bg-gradient-to-r from-[#ece3e3] to-[#e3e3e3] font-['Noto_Sans',sans-serif]">
      {/* Title bar */}
      <div className="flex h-[62px] shrink-0 items-center text-[#333]">
        <div className="ml-[20px]"><WordLogo /></div>
        <span className="ml-[21px] text-[14px]">AutoSave</span>
        <div className="ml-[6px] flex h-[24px] w-[56px] items-center rounded-full border border-[#666] bg-white pl-[4px] text-[13px]">
          <span className="h-[17px] w-[17px] rounded-full bg-[#666]" />
          <span className="ml-[5px] text-[#555]">Off</span>
        </div>
        <svg width="22" height="22" viewBox="0 0 22 22" className="ml-[16px]" fill="#f3d7f3" stroke="#9c2f9c" strokeWidth="2">
          <path d="M1 1h20v20H6l-5-5z" />
          <path d="M6 1v7h10V1M6 21v-7h10v7" fill="#fff" />
        </svg>
        <svg width="22" height="24" viewBox="0 0 22 24" fill="none" stroke="#444" strokeWidth="1.300" className="ml-[15px]">
          <path d="M8 1 2 7l6 6M2 7h11c8 0 9 10 1 15" />
        </svg>
        <ChevronDown size={11} className="ml-[5px] text-[#444]" />
        <svg width="22" height="24" viewBox="0 0 22 24" fill="none" stroke="#555" strokeWidth="1.300" className="ml-[13px]">
          <path d="M13 3a9 9 0 1 1-7 2" />
          <path d="M12 1v6" />
        </svg>
        <svg width="11" height="11" viewBox="0 0 10 10" fill="none" stroke="#444" strokeWidth="1" className="ml-[21px]">
          <path d="M1.500 1.500h7M1.500 5l3.500 3.500L8.500 5" />
        </svg>
        <span className="ml-[33px] w-[330px] shrink-0 whitespace-pre text-[15px]">Document1  -  Word (Product Activation Fai...</span>
        <div className="ml-[24px] flex h-[39px] w-[478px] shrink-0 items-center rounded-[5px] bg-white pl-[18px] text-[16px] text-[#666] shadow-[0_1px_3px_rgba(0,0,0,0.35)]">
          <Search size={20} strokeWidth={1.2} className="-scale-x-100" />
          <span className="ml-[14px]">Search</span>
        </div>
        <div className="ml-auto flex h-[31px] w-[31px] items-center justify-center rounded-full bg-[#03634f] text-[13px] text-[#b5d8cf]">RF</div>
        <Minus size={18} strokeWidth={1.2} className="ml-[38px]" />
        <svg width="15" height="15" viewBox="0 0 15 15" fill="none" stroke="#333" strokeWidth="1.200" className="ml-[48px]">
          <rect x="1" y="3.500" width="10.500" height="10.500" rx="2" />
          <path d="M4 1.500h7.500c1.500 0 2.500 1 2.500 2.500v7" />
        </svg>
        <X size={20} strokeWidth={1.2} className="mr-[22px] ml-[44px]" />
      </div>
      {/* Tabs */}
      <div className="flex h-[40px] shrink-0 items-start pl-[28px] text-[16px] leading-[40px] text-[#333]">
        <span>File</span>
        <span className="relative ml-[32px] font-semibold text-[#222]">
          Home
          <span className="absolute right-0 bottom-[-3px] left-0 h-[3px] bg-[#185abd]" />
        </span>
        <span className="ml-[24px]">WPS PDF</span>
        <span className="ml-[27px]">Insert</span>
        <span className="ml-[22px]">Draw</span>
        <span className="ml-[24px]">Design</span>
        <span className="ml-[23px]">Layout</span>
        <span className="ml-[24px]">References</span>
        <span className="ml-[23px]">Mailings</span>
        <span className="ml-[25px]">Review</span>
        <span className="ml-[25px]">View</span>
        <span className="ml-[24px]">Help</span>
        <div className="mt-[5px] ml-auto flex h-[31px] items-center leading-none">
          <div className="flex h-full w-[117px] items-center justify-center gap-[6px] rounded-[4px] border border-[#aaa] bg-white text-[16px]">
            <MessageSquare size={16} strokeWidth={1.3} /> Comments
          </div>
          <div className="ml-[11px] flex h-full w-[106px] items-center justify-center gap-[5px] rounded-[4px] border border-[#aaa] bg-white text-[16px]">
            <Pencil size={19} strokeWidth={1.2} /> Editing <ChevronDown size={11} />
          </div>
          <div className="mr-[16px] ml-[10px] flex h-full w-[91px] items-center justify-center gap-[5px] rounded-[4px] bg-[#185abd] text-[16px] text-white">
            <svg width="17" height="17" viewBox="0 0 17 17" fill="none" stroke="#fff" strokeWidth="1.200">
              <path d="M6 4H1v12h12v-4" />
              <path d="M11 1l5 4.500L11 10V7.500C8 7.500 6 9 5 12c0-5 2-7.500 6-8z" />
            </svg>
            Share <ChevronDown size={11} />
          </div>
        </div>
      </div>
      {/* Ribbon */}
      <div className="relative z-10 mx-[10px] h-[132px] shrink-0 rounded-[10px] bg-white pt-[7px] shadow-[0_1px_4px_rgba(0,0,0,0.25)]">
        <div className="flex">
          <Group className="w-[115px]" label="Clipboard" launcher><ClipboardGroup /></Group>
          <Group className="w-[405px]" label="Font" launcher><FontGroup /></Group>
          <Group className="w-[323px]" label="Paragraph" launcher><ParagraphGroup /></Group>
          <Group className="w-[481px]" label="Styles" launcher><StylesGroup /></Group>
          <Group className="w-[122px]" label="Editing"><EditingGroup /></Group>
          <Group className="w-[136px]" label="WPS PDF"><WpsGroup /></Group>
          <Group className="w-[75px]" label="Voice"><VoiceGroup /></Group>
          <Group className="w-[76px]" label="Editor"><EditorGroup /></Group>
          <Group className="w-[82px]" label="Add-ins"><AddinsGroup /></Group>
        </div>
        <ChevronDown size={18} strokeWidth={1.4} className="absolute right-[10px] bottom-[9px] text-[#333]" />
      </div>
      {/* Document */}
      <div className="min-h-0 flex-1 bg-gradient-to-r from-[#e5e5e5] to-[#e9e3e3]"><Page /></div>
      <StatusBar />
      <Taskbar />
      <div className="absolute top-[964px] right-0 flex h-[38px] w-[125px] items-center justify-center rounded-[5px] bg-[#2b2b2b] text-[15px] text-white">
        Show desktop
      </div>
    </div>
  );
}
